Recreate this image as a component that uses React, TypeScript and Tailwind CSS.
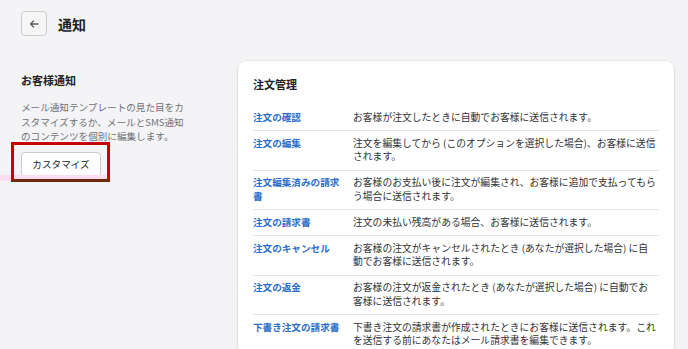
import React from "react";

const rows: { label: string; desc: string }[] = [
  { label: "注文の確認", desc: "お客様が注文したときに自動でお客様に送信されます。" },
  { label: "注文の編集", desc: "注文を編集してから (このオプションを選択した場合)、お客様に送信されます。" },
  { label: "注文編集済みの請求書", desc: "お客様のお支払い後に注文が編集され、お客様に追加で支払ってもらう場合に送信されます。" },
  { label: "注文の請求書", desc: "注文の未払い残高がある場合、お客様に送信されます。" },
  { label: "注文のキャンセル", desc: "お客様の注文がキャンセルされたとき (あなたが選択した場合) に自動でお客様に送信されます。" },
  { label: "注文の返金", desc: "お客様の注文が返金されたとき (あなたが選択した場合) に自動でお客様に送信されます。" },
  { label: "下書き注文の請求書", desc: "下書き注文の請求書が作成されたときにお客様に送信されます。これを送信する前にあなたはメール請求書を編集できます。" },
];

export default function App() {
  return (
    <div
      className="relative h-[349px] w-[688px] overflow-hidden bg-[#f4f4f6] text-[#202223]"
      style={{ fontFamily: '"Noto Sans CJK JP", "Noto Sans", sans-serif' }}
    >
      {/* header */}
      <div className="flex items-center gap-[11px] pl-[21px] pt-[11px]">
        <button className="flex h-[25px] w-[26px] items-center justify-center rounded-[4px] border border-[#c9cccf] bg-[#f6f6f7]">
          <svg width="12" height="12" viewBox="0 0 12 12" fill="none">
            <path d="M10 6H2.5M5.5 3L2.5 6L5.5 9" stroke="#5c5f62" strokeWidth="1.3" strokeLinecap="round" strokeLinejoin="round" />
          </svg>
        </button>
        <h1 className="text-[14px] font-semibold leading-[20px]">通知</h1>
      </div>

      {/* body */}
      <div className="mt-[25px] flex">
        <div className="w-[238px] shrink-0 pl-[21px] pt-[11px]">
          <h2 className="text-[11px] font-semibold leading-[16px]">お客様通知</h2>
          <p className="mt-[12px] w-[170px] text-[9.6px] leading-[14.5px] text-[#6d7175]">
            メール通知テンプレートの見た目をカスタマイズするか、メールとSMS通知のコンテンツを個別に編集します。
          </p>
          <button className="mt-[8px] flex h-[25px] w-[80px] items-center justify-center rounded-[4px] border border-[#c9cccf] bg-white text-[9.6px] text-[#202223] shadow-[0_1px_0_rgba(0,0,0,0.05)]">
            カスタマイズ
          </button>
        </div>

        <div className="w-[436px] shrink-0 rounded-[8px] bg-white pl-[15px] pt-[15px] shadow-[0_0_0_1px_rgba(63,63,68,0.04),0_1px_3px_rgba(63,63,68,0.12)]">
          <h3 className="text-[11px] font-semibold leading-[16px]">注文管理</h3>
          <div className="mt-[13px] w-[406px]">
            {rows.map((r, i) => (
              <div
                key={i}
                className={`flex py-[5.75px] ${i < rows.length - 1 ? "border-b border-[#e4e5e7]" : ""}`}
              >
                <div className="mr-[10px] w-[90px] shrink-0 text-[9.6px] font-semibold leading-[13.5px] text-[#2c6ecb]">
                  {r.label}
                </div>
                <div className="w-[304.2px] shrink-0 text-[9.8px] leading-[13.5px] text-[#303236]">{r.desc}</div>
              </div>
            ))}
          </div>
        </div>
      </div>

      {/* annotation overlay */}
      <div className="absolute left-0 top-[175px] h-[6px] w-[108px] bg-[#fcdcf0]" />
      <div className="absolute left-[11px] top-[142px] h-[40px] w-[99px] border-[3px] border-[#c80000] border-b-[#6e2a0c]" />
    </div>
  );
}
